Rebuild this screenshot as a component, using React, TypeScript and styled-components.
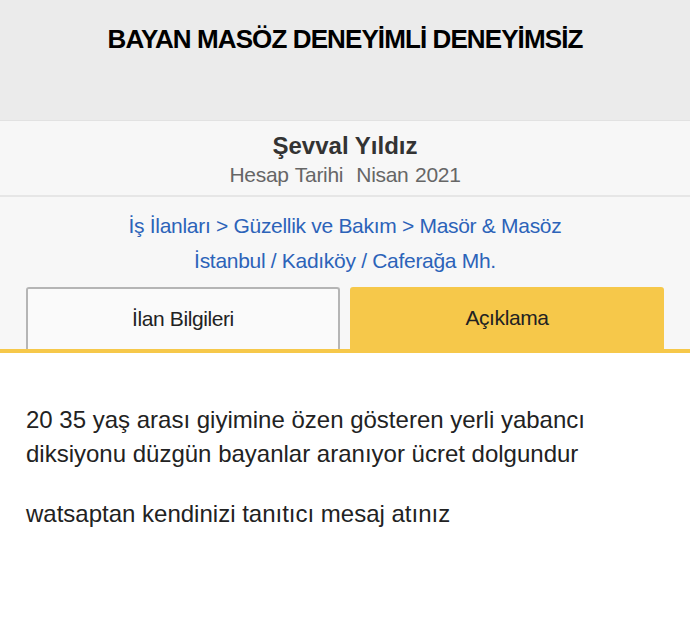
import React from 'react'
import styled, { createGlobalStyle } from 'styled-components'

const GlobalStyle = createGlobalStyle`
  body {
    margin: 0;
    background: #ffffff;
    font-family: "Liberation Sans", Arial, sans-serif;
  }
`

const Header = styled.header`
  height: 121px;
  background: #ebebeb;
  border-bottom: 1px solid #e2e2e2;
  display: flex;
  justify-content: center;
  padding-top: 21px;
  box-sizing: border-box;
`

const Title = styled.h1`
  margin: 0;
  font-size: 26px;
  font-weight: bold;
  color: #000;
  letter-spacing: -0.9px;
  line-height: 36px;
`

const UserBox = styled.section`
  background: #f7f7f7;
  border-bottom: 2px solid #e6e6e6;
  height: 76px;
  box-sizing: border-box;
  display: flex;
  flex-direction: column;
  align-items: center;
  padding-top: 10px;
`

const UserName = styled.div`
  font-size: 24px;
  font-weight: bold;
  color: #333;
  line-height: 30px;
`

const AccountDate = styled.div`
  font-size: 21px;
  color: #666;
  letter-spacing: -0.3px;
  line-height: 28px;
  word-spacing: 1px;
`

const Crumbs = styled.section`
  background: #f7f7f7;
  display: flex;
  flex-direction: column;
  align-items: center;
  padding-top: 11px;
`

const CrumbLine = styled.div`
  font-size: 21px;
  color: #2c63b9;
  letter-spacing: -0.3px;
  line-height: 35px;
`

const Tabs = styled.div`
  background: #f7f7f7;
  display: grid;
  grid-template-columns: 1fr 1fr;
  gap: 10px;
  padding: 9px 26px 0;
  border-bottom: 4px solid #f6c84a;
`

const Tab = styled.div<{ $active?: boolean }>`
  height: 62px;
  box-sizing: border-box;
  display: flex;
  align-items: center;
  justify-content: center;
  font-size: 21px;
  letter-spacing: -0.4px;
  color: #222;
  border-radius: 3px 3px 0 0;
  background: ${p => (p.$active ? '#f6c84a' : '#fafafa')};
  border: ${p => (p.$active ? 'none' : '2px solid #b5b5b5')};
  border-bottom: none;
`

const Description = styled.section`
  background: #fff;
  padding: 50px 26px 0;
`

const Paragraph = styled.p`
  margin: 0 0 26px;
  font-size: 24px;
  line-height: 34px;
  color: #222;
`

export default function App() {
  return (
    <>
      <GlobalStyle />
      <Header>
        <Title>BAYAN MASÖZ DENEYİMLİ DENEYİMSİZ</Title>
      </Header>
      <UserBox>
        <UserName>Şevval Yıldız</UserName>
        <AccountDate>Hesap Tarihi&nbsp;&nbsp;Nisan 2021</AccountDate>
      </UserBox>
      <Crumbs>
        <CrumbLine>İş İlanları &gt; Güzellik ve Bakım &gt; Masör &amp; Masöz</CrumbLine>
        <CrumbLine>İstanbul / Kadıköy / Caferağa Mh.</CrumbLine>
      </Crumbs>
      <Tabs>
        <Tab>İlan Bilgileri</Tab>
        <Tab $active>Açıklama</Tab>
      </Tabs>
      <Description>
        <Paragraph>
          20 35 yaş arası giyimine özen gösteren yerli yabancı diksiyonu düzgün bayanlar aranıyor ücret dolgundur
        </Paragraph>
        <Paragraph>watsaptan kendinizi tanıtıcı mesaj atınız</Paragraph>
      </Description>
    </>
  )
}
